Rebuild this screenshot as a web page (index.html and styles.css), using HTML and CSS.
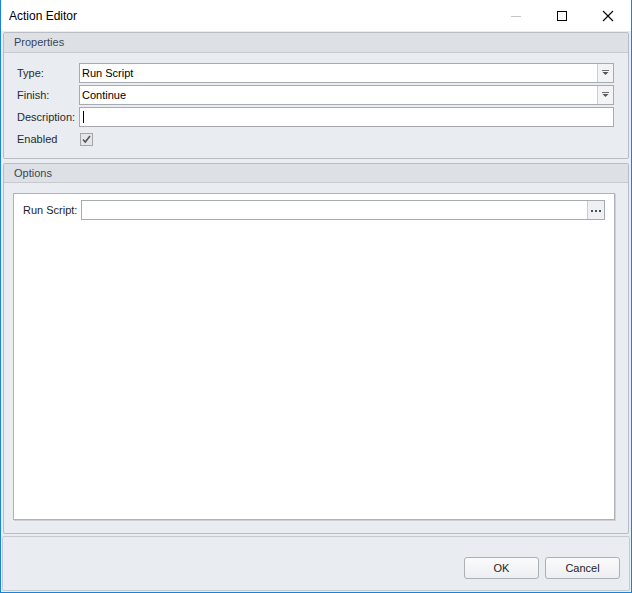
FILE: index.html
```html
<!DOCTYPE html>
<html>
<head>
<meta charset="utf-8">
<link rel="stylesheet" href="styles.css">
</head>
<body>
<div class="window">
  <div class="titlebar">
    <span class="title">Action Editor</span>
    <div class="controls">
      <span class="ctl"><svg width="12" height="12" viewBox="0 0 12 12"><line x1="1" y1="6.5" x2="11" y2="6.5" stroke="#c4c4c4" stroke-width="1"/></svg></span>
      <span class="ctl"><svg width="12" height="12" viewBox="0 0 12 12"><rect x="1.5" y="1.5" width="9" height="9" fill="none" stroke="#000" stroke-width="1"/></svg></span>
      <span class="ctl"><svg width="12" height="12" viewBox="0 0 12 12"><path d="M1 1 L11 11 M11 1 L1 11" stroke="#000" stroke-width="1.1" fill="none"/></svg></span>
    </div>
  </div>
  <div class="content">
    <div class="group props">
      <div class="ghead">Properties</div>
      <div class="gbody form">
        <label class="lbl">Type:</label>
        <div class="combo"><span class="val">Run Script</span><span class="dd"><svg width="9" height="6" viewBox="0 0 9 6"><path d="M1 0.5 H8" stroke="#6a6a6a" stroke-width="1"/><path d="M1.5 2 L7.5 2 L4.5 5 Z" fill="#555"/></svg></span></div>
        <label class="lbl">Finish:</label>
        <div class="combo"><span class="val">Continue</span><span class="dd"><svg width="9" height="6" viewBox="0 0 9 6"><path d="M1 0.5 H8" stroke="#6a6a6a" stroke-width="1"/><path d="M1.5 2 L7.5 2 L4.5 5 Z" fill="#555"/></svg></span></div>
        <label class="lbl">Description:</label>
        <div class="combo"><span class="caret"></span></div>
        <label class="lbl">Enabled</label>
        <div class="chkcell"><span class="chk"><svg width="11" height="11" viewBox="0 0 11 11"><path d="M2 5.5 L4.3 8 L9 2" stroke="#555" stroke-width="1.6" fill="none"/></svg></span></div>
      </div>
    </div>
    <div class="group opts">
      <div class="ghead short">Options</div>
      <div class="gbody optbody">
        <div class="panel">
          <div class="runrow">
            <label class="lbl2">Run Script:</label>
            <div class="combo"><span class="val"></span><span class="ell"><i></i><i></i><i></i></span></div>
          </div>
        </div>
      </div>
    </div>
    <div class="footer">
      <button class="btn">OK</button>
      <button class="btn">Cancel</button>
    </div>
  </div>
</div>
</body>
</html>
```
FILE: styles.css
```css
html, body { margin: 0; padding: 0; }
body { font-family: "Liberation Sans", Arial, sans-serif; font-size: 11px; color: #1e1e1e; }
.window {
  width: 632px; height: 593px; box-sizing: border-box;
  border: 1px solid #1883d7; border-top: none;
  display: flex; flex-direction: column; background: #e9ecf0;
}
.titlebar {
  height: 31px; background: #fff; display: flex; align-items: center;
  justify-content: space-between; flex: none;
}
.title { font-size: 12px; color: #000; padding-left: 8px; padding-top: 1px; }
.controls { display: flex; height: 31px; }
.ctl { width: 46px; display: flex; align-items: center; justify-content: center; }
.content { flex: 1; display: flex; flex-direction: column; padding: 1px 2px 1px 2px; }
.group { border: 1px solid #b9bcc2; border-radius: 2px; background: #e9ecf0; }
.ghead {
  height: 19px; line-height: 19px; background: #dde1e6; border-bottom: 1px solid #c7cbd0;
  padding-left: 10px; color: #3a4656; font-size: 11px;
}
.ghead.short { height: 18px; line-height: 18px; }
.form {
  display: grid; grid-template-columns: 62px 1fr; grid-auto-rows: 20px; row-gap: 2px;
  padding: 10px 14px 9px 13px;
}
.lbl { display: flex; align-items: center; color: #2a2a2a; }
.combo {
  border: 1px solid #a7abb0; background: #fff; display: flex; align-items: stretch;
  box-sizing: border-box; height: 20px;
}
.val { flex: 1; display: flex; align-items: center; padding-left: 2px; color: #000; }
.dd {
  width: 15px; border-left: 1px solid #c9ccd0; background: #f3f4f6;
  display: flex; align-items: center; justify-content: center;
}
.caret { width: 1px; height: 12px; background: #000; margin: 3px 0 0 3px; }
.chkcell { display: flex; align-items: center; }
.chk {
  width: 11px; height: 11px; border: 1px solid #a3a6aa; background: #e4e6ea;
  margin-left: 1px; display: flex;
}
.props { flex: none; }
.opts { flex: none; margin-top: 4px; height: 371px; box-sizing: border-box; display: flex; flex-direction: column; }
.optbody { flex: 1; padding: 10px 13px 13px 9px; display: flex; }
.panel {
  flex: 1; background: #fff; border: 1px solid #afb3b9; box-shadow: 1px 1px 0 #cdd0d5;
  padding: 6px 9px 0 9px;
}
.runrow { display: flex; align-items: center; height: 20px; }
.lbl2 { width: 58px; flex: none; color: #1e1e1e; }
.runrow .combo { flex: 1; }
.ell {
  width: 16px; border-left: 1px solid #c9ccd0; background: #eef0f3;
  display: flex; align-items: center; justify-content: center; gap: 2px; padding-top: 1px;
}
.ell i { width: 2px; height: 2px; background: #4a4f57; display: block; }
.footer {
  margin: 2px -1px 0 -1px; flex: 1; border: 1px solid #c7cacf; border-radius: 2px;
  display: flex; justify-content: flex-end; align-items: flex-start;
  padding: 20px 9px 0 0; gap: 6px;
}
.btn {
  width: 75px; height: 22px; border: 1px solid #acb0b5; border-radius: 3px;
  background: linear-gradient(#fbfbfc, #eceef1); font-family: "Liberation Sans", Arial, sans-serif;
  font-size: 11px; color: #1e1e1e; padding: 0; margin: 0;
}
```
